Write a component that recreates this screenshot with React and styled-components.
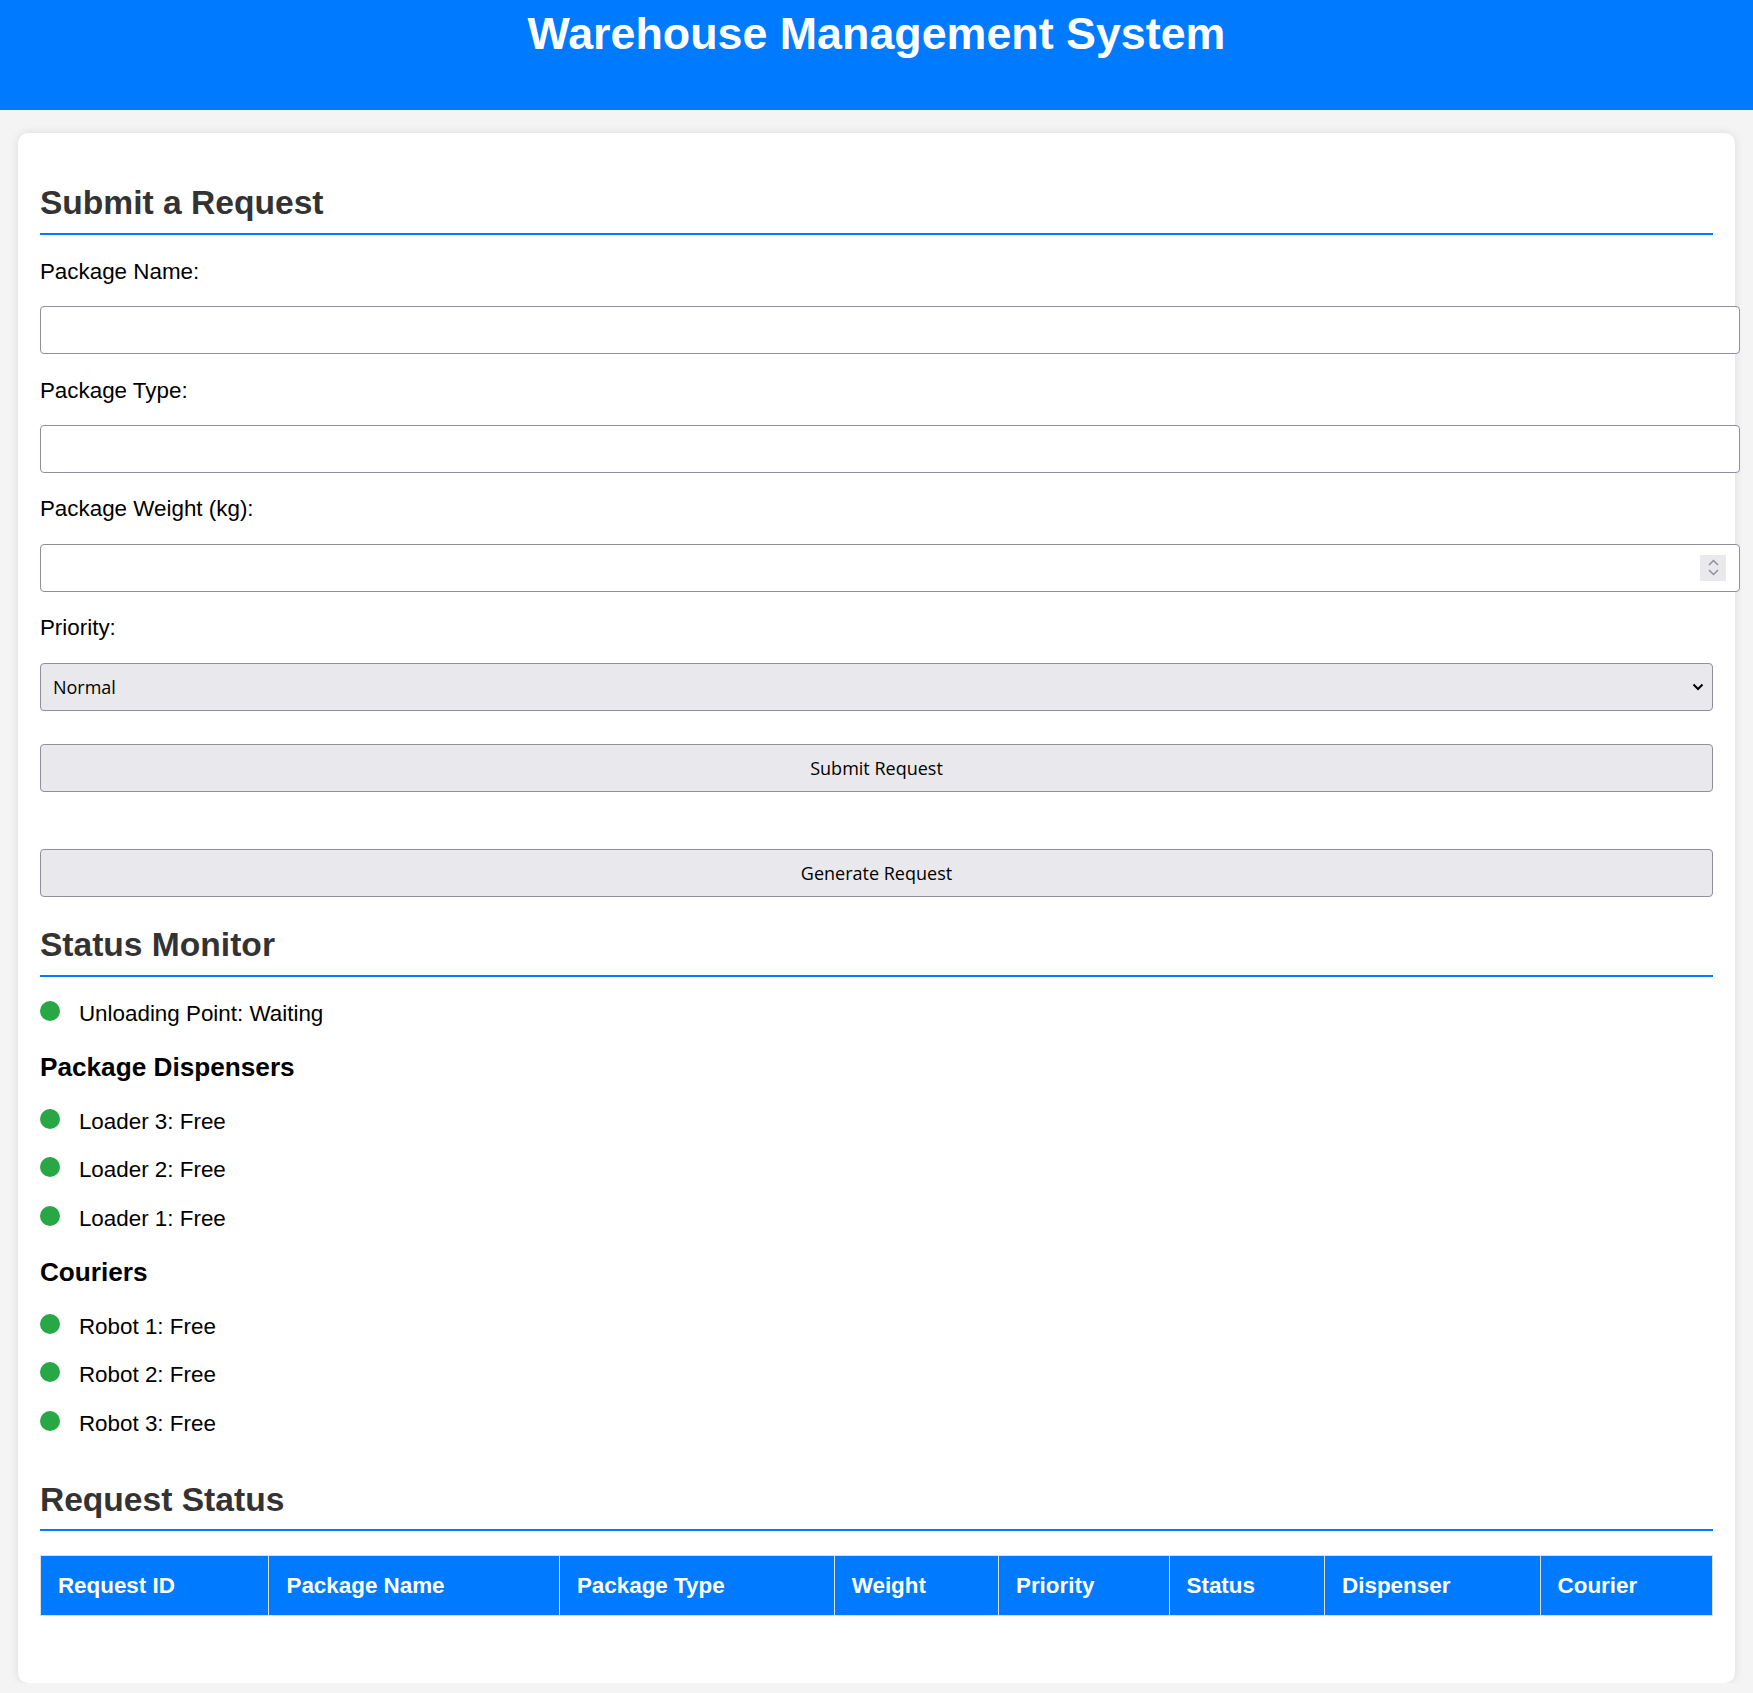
import React from 'react';
import styled, { createGlobalStyle } from 'styled-components';

const GlobalStyle = createGlobalStyle`
  body {
    margin: 0;
    background: #f4f4f4;
    font-family: "Liberation Sans", Arial, sans-serif;
    font-size: 22.4px;
    color: #000;
  }
`;

const Header = styled.header`
  height: 110px;
  box-sizing: border-box;
  padding-top: 8px;
  background: #007bff;
  color: #fff;
  text-align: center;
`;

const Title = styled.h1`
  margin: 0;
  font-size: 44.8px;
  font-weight: 700;
`;

const Card = styled.main`
  width: 98%;
  box-sizing: border-box;
  margin: 23px auto 0;
  padding: 22.4px;
  background: #fff;
  border-radius: 10px;
  box-shadow: 0 0 10px rgba(0, 0, 0, 0.1);
`;

const SectionTitle = styled.h2`
  margin: ${(p) => p.$top || 29}px 0 24px;
  padding-bottom: 10.5px;
  border-bottom: 2px solid #007bff;
  font-size: 33.6px;
  font-weight: 700;
  color: #333;
`;

const Label = styled.label`
  display: block;
  line-height: 26px;
  margin-bottom: 21.4px;
`;

const InputWrap = styled.div`
  position: relative;
  width: calc(100% + 27px);
  margin-bottom: 23.4px;
`;

const TextInput = styled.input`
  display: block;
  width: 100%;
  height: 48px;
  box-sizing: border-box;
  padding: 0 12px;
  border: 1px solid #8f8f9d;
  border-radius: 4px;
  background: #fff;
  font-family: "Open Sans", sans-serif;
  font-size: 18px;

  &::-webkit-inner-spin-button,
  &::-webkit-outer-spin-button {
    -webkit-appearance: none;
    margin: 0;
  }
  -moz-appearance: textfield;
`;

const Spinner = styled.span`
  position: absolute;
  right: 14px;
  top: 50%;
  transform: translateY(-50%);
  width: 26px;
  height: 26px;
  background: #e9e9ed;
  display: flex;
  flex-direction: column;
  align-items: center;
  justify-content: center;
  gap: 3px;
  pointer-events: none;
`;

const SelectWrap = styled.div`
  position: relative;
  margin-bottom: 33.5px;
`;

const Select = styled.select`
  display: block;
  width: 100%;
  height: 48px;
  box-sizing: border-box;
  padding: 0 12px;
  appearance: none;
  border: 1px solid #8f8f9d;
  border-radius: 4px;
  background: #e9e9ed;
  color: #000;
  font-family: "Open Sans", sans-serif;
  font-size: 18px;
`;

const SelectArrow = styled.svg`
  position: absolute;
  right: 9px;
  top: 50%;
  transform: translateY(-50%);
  pointer-events: none;
`;

const Button = styled.button`
  display: block;
  width: 100%;
  height: 48px;
  margin-bottom: ${(p) => p.$gap || 0}px;
  border: 1px solid #8f8f9d;
  border-radius: 4px;
  background: #e9e9ed;
  color: #000;
  font-family: "Open Sans", sans-serif;
  font-size: 18px;
  cursor: pointer;
`;

const GroupTitle = styled.h3`
  margin: 25.5px 0;
  font-size: 26.2px;
  font-weight: 700;
  color: #000;
`;

const StatusItem = styled.div`
  margin-bottom: 22.5px;
`;

const Dot = styled.span`
  display: inline-block;
  width: 20px;
  height: 20px;
  margin-right: 19px;
  border-radius: 50%;
  background: ${(p) => p.$color || '#28a745'};
`;

const Table = styled.table`
  width: 100%;
  border-collapse: collapse;
  margin-bottom: 44px;
`;

const Th = styled.th`
  padding: 16.5px 17px;
  border: 1px solid #ddd;
  background: #007bff;
  color: #fff;
  text-align: left;
  font-weight: 700;
  font-size: 22.4px;
`;

const Chevron = ({ up }) => (
  <svg width="11" height="7" viewBox="0 0 11 7">
    <polyline
      points={up ? '1,6 5.5,1.5 10,6' : '1,1 5.5,5.5 10,1'}
      fill="none"
      stroke="#8f8f9d"
      strokeWidth="1.5"
    />
  </svg>
);

const dispensers = ['Loader 3', 'Loader 2', 'Loader 1'];
const couriers = ['Robot 1', 'Robot 2', 'Robot 3'];
const columns = [
  'Request ID',
  'Package Name',
  'Package Type',
  'Weight',
  'Priority',
  'Status',
  'Dispenser',
  'Courier',
];

export default function App() {
  return (
    <>
      <GlobalStyle />
      <Header>
        <Title>Warehouse Management System</Title>
      </Header>
      <Card>
        <section>
          <SectionTitle>Submit a Request</SectionTitle>
          <Label htmlFor="name">Package Name:</Label>
          <InputWrap>
            <TextInput id="name" type="text" />
          </InputWrap>
          <Label htmlFor="type">Package Type:</Label>
          <InputWrap>
            <TextInput id="type" type="text" />
          </InputWrap>
          <Label htmlFor="weight">Package Weight (kg):</Label>
          <InputWrap>
            <TextInput id="weight" type="number" />
            <Spinner>
              <Chevron up />
              <Chevron />
            </Spinner>
          </InputWrap>
          <Label htmlFor="priority">Priority:</Label>
          <SelectWrap>
            <Select id="priority" defaultValue="normal">
              <option value="normal">Normal</option>
              <option value="high">High</option>
            </Select>
            <SelectArrow width="12" height="8" viewBox="0 0 12 8">
              <polyline points="1.5,1.5 6,6 10.5,1.5" fill="none" stroke="#000" strokeWidth="2" />
            </SelectArrow>
          </SelectWrap>
          <Button $gap={57}>Submit Request</Button>
          <Button>Generate Request</Button>
        </section>

        <section>
          <SectionTitle>Status Monitor</SectionTitle>
          <StatusItem>
            <Dot />
            Unloading Point: Waiting
          </StatusItem>
          <GroupTitle>Package Dispensers</GroupTitle>
          {dispensers.map((d) => (
            <StatusItem key={d}>
              <Dot />
              {d}: Free
            </StatusItem>
          ))}
          <GroupTitle>Couriers</GroupTitle>
          {couriers.map((c) => (
            <StatusItem key={c}>
              <Dot />
              {c}: Free
            </StatusItem>
          ))}
        </section>

        <section>
          <SectionTitle $top={44}>Request Status</SectionTitle>
          <Table>
            <thead>
              <tr>
                {columns.map((c) => (
                  <Th key={c}>{c}</Th>
                ))}
              </tr>
            </thead>
            <tbody />
          </Table>
        </section>
      </Card>
    </>
  );
}
